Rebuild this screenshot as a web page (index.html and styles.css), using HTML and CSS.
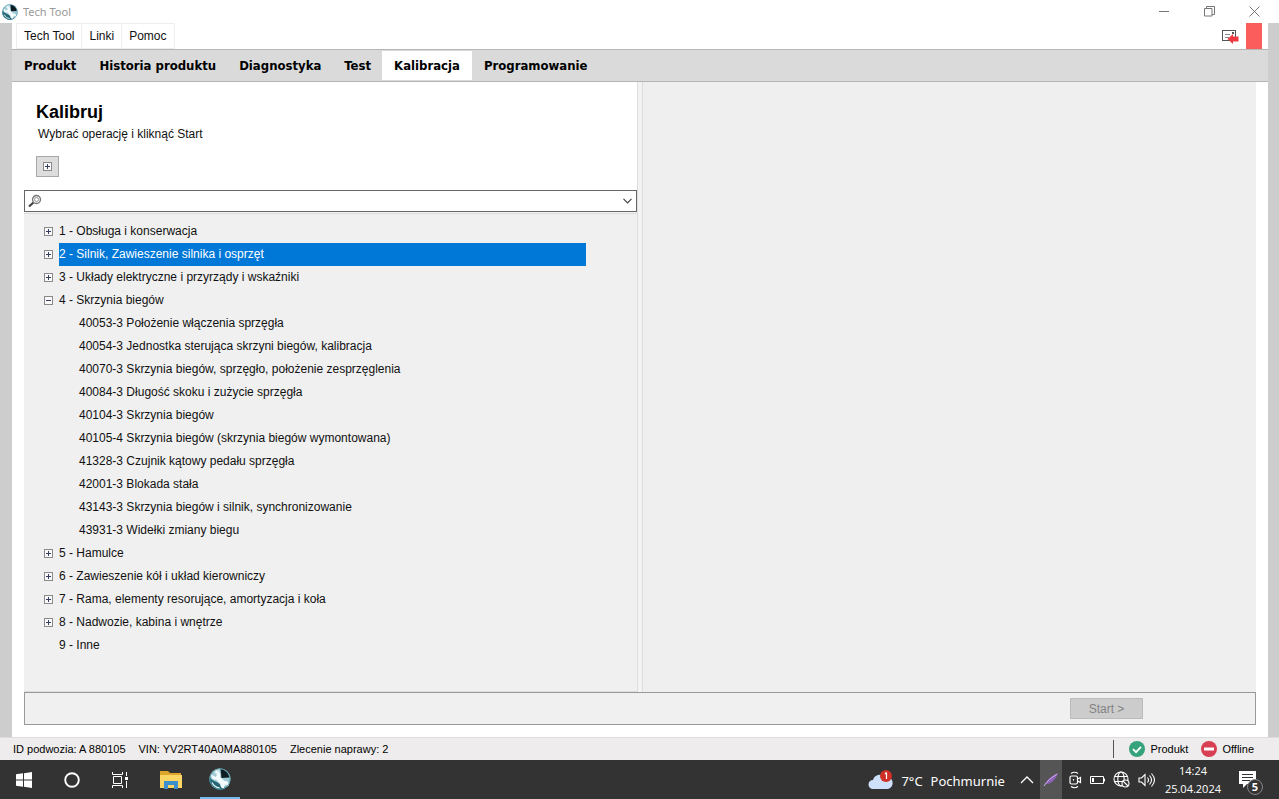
FILE: index.html
```html
<!DOCTYPE html>
<html lang="pl">
<head>
<meta charset="utf-8">
<title>Tech Tool</title>
<link rel="stylesheet" href="styles.css">
</head>
<body>
<svg class="defs" aria-hidden="true">
  <symbol id="logo" viewBox="0 0 22 22">
    <circle cx="11" cy="11" r="10.600" fill="#9fcbd6"/>
    <path d="M4.500 3A10.600 10.600 0 0 1 10.500.4V9L7 6.500z" fill="#cfe6ec"/>
    <path d="M11.500 1A10 10 0 0 1 20.500 9.500L12.500 10z" fill="#101c24"/>
    <path d="M.6 9C3 13 7 13 10 15.500 12 18 15 20 18 19A10.600 10.600 0 0 1 .6 9z" fill="#256373"/>
    <path d="M2.500 6.500l4 2.500 2-2.500-2-3.500c4 .5 5.500 3 4.500 6l4.500 4c3 0 5 2 4 5l-2.500-1.500-2 1.500.5 2.500c-3 0-4.500-2-4-4.500l-4.500-4.500C4.500 12.500 2 10 2.500 6.500z" fill="#f4fbfd"/>
    <path d="M3 14.500c1.500 3 4 5 7.500 5.500" fill="none" stroke="#e6f7fa" stroke-width="1.300"/>
    <circle cx="11" cy="11" r="10.200" fill="none" stroke="#4d95a5" stroke-width=".8"/>
  </symbol>
  <symbol id="plus" viewBox="0 0 9 9">
    <rect x=".5" y=".5" width="8" height="8" fill="#fafafa" stroke="#8a8a8a"/>
    <path d="M2 4.500h5M4.500 2v5" stroke="#33415e"/>
  </symbol>
  <symbol id="minus" viewBox="0 0 9 9">
    <rect x=".5" y=".5" width="8" height="8" fill="#fafafa" stroke="#8a8a8a"/>
    <path d="M2 4.500h5" stroke="#33415e"/>
  </symbol>
</svg>

<header class="titlebar">
  <svg class="title-logo"><use href="#logo"/></svg>
  <span class="title">Tech Tool</span>
  <div class="window-buttons">
    <button aria-label="Minimalizuj"><svg width="11" height="11" viewBox="0 0 11 11"><path d="M0 5.500h10"/></svg></button>
    <button aria-label="Przywróć"><svg width="11" height="11" viewBox="0 0 11 11"><path d="M.5 2.500h7.500v7.500H.5zM2.500 2.500v-2h8v8H8"/></svg></button>
    <button aria-label="Zamknij"><svg width="11" height="11" viewBox="0 0 11 11"><path d="M.5.5l10 10M10.500.5l-10 10"/></svg></button>
  </div>
</header>

<div class="frame">
  <div class="menubar">
    <button class="menu-item">Tech Tool</button>
    <button class="menu-item">Linki</button>
    <button class="menu-item">Pomoc</button>
    <div class="menu-right">
      <svg width="17" height="15" viewBox="0 0 17 15">
        <rect x=".5" y="1.500" width="13" height="10" fill="#fff" stroke="#555"/>
        <path d="M3 5.500h5M3 8.500h4" stroke="#888"/>
        <path d="M10 3h2v2h-2z" fill="#555"/>
        <path d="M5.500 10l5.500-5V7.500h5.500v5H11V15z" fill="#ee3b42"/>
      </svg>
      <span class="flag"></span>
    </div>
  </div>

  <nav class="tabs">
    <button class="tab">Produkt</button>
    <button class="tab">Historia produktu</button>
    <button class="tab">Diagnostyka</button>
    <button class="tab">Test</button>
    <button class="tab active">Kalibracja</button>
    <button class="tab">Programowanie</button>
  </nav>

  <main class="content">
    <div class="panes">
      <section class="left">
        <div class="intro">
          <h1>Kalibruj</h1>
          <p>Wybrać operację i kliknąć Start</p>
          <button class="expand-all" aria-label="Rozwiń wszystko"><svg class="box"><use href="#plus"/></svg></button>
        </div>
        <div class="search">
          <svg width="15" height="14" viewBox="0 0 15 14"><path d="M1 12.500l4.500-4" stroke="#444" stroke-width="2.200"/><circle cx="8.500" cy="5.500" r="4" fill="#eee" stroke="#777" stroke-width="1.300"/><circle cx="8.500" cy="5.500" r="2" fill="#fff" stroke="#999"/></svg>
          <input type="text" aria-label="Szukaj">
          <button aria-label="Pokaż listę"><svg width="9" height="6" viewBox="0 0 9 6"><path d="M.5.8l4 4 4-4" fill="none" stroke="#444" stroke-width="1.200"/></svg></button>
        </div>
        <ul class="tree">
          <li><div class="row"><button aria-label="Rozwiń 1"><svg class="box"><use href="#plus"/></svg></button><span>1 - Obsługa i konserwacja</span></div></li>
          <li><div class="row selected"><button aria-label="Rozwiń 2"><svg class="box"><use href="#plus"/></svg></button><span>2 - Silnik, Zawieszenie silnika i osprzęt</span></div></li>
          <li><div class="row"><button aria-label="Rozwiń 3"><svg class="box"><use href="#plus"/></svg></button><span>3 - Układy elektryczne i przyrządy i wskaźniki</span></div></li>
          <li><div class="row"><button aria-label="Zwiń 4"><svg class="box"><use href="#minus"/></svg></button><span>4 - Skrzynia biegów</span></div>
            <ul class="children">
              <li>40053-3 Położenie włączenia sprzęgła</li>
              <li>40054-3 Jednostka sterująca skrzyni biegów, kalibracja</li>
              <li>40070-3 Skrzynia biegów, sprzęgło, położenie zesprzęglenia</li>
              <li>40084-3 Długość skoku i zużycie sprzęgła</li>
              <li>40104-3 Skrzynia biegów</li>
              <li>40105-4 Skrzynia biegów (skrzynia biegów wymontowana)</li>
              <li>41328-3 Czujnik kątowy pedału sprzęgła</li>
              <li>42001-3 Blokada stała</li>
              <li>43143-3 Skrzynia biegów i silnik, synchronizowanie</li>
              <li>43931-3 Widełki zmiany biegu</li>
            </ul>
          </li>
          <li><div class="row"><button aria-label="Rozwiń 5"><svg class="box"><use href="#plus"/></svg></button><span>5 - Hamulce</span></div></li>
          <li><div class="row"><button aria-label="Rozwiń 6"><svg class="box"><use href="#plus"/></svg></button><span>6 - Zawieszenie kół i układ kierowniczy</span></div></li>
          <li><div class="row"><button aria-label="Rozwiń 7"><svg class="box"><use href="#plus"/></svg></button><span>7 - Rama, elementy resorujące, amortyzacja i koła</span></div></li>
          <li><div class="row"><button aria-label="Rozwiń 8"><svg class="box"><use href="#plus"/></svg></button><span>8 - Nadwozie, kabina i wnętrze</span></div></li>
          <li><div class="row leaf"><span>9 - Inne</span></div></li>
        </ul>
      </section>
      <section class="right"></section>
    </div>
    <div class="actions"><button class="start" disabled>Start &gt;</button></div>
  </main>
</div>

<div class="status">
  <span>ID podwozia: A 880105</span>
  <span>VIN: YV2RT40A0MA880105</span>
  <span>Zlecenie naprawy: 2</span>
  <div class="status-right">
    <span class="state"><svg width="16" height="16" viewBox="0 0 16 16"><circle cx="8" cy="8" r="8" fill="#36a37c"/><path d="M4 8.200l3 3 5-5.400" fill="none" stroke="#fff" stroke-width="1.800"/></svg>Produkt</span>
    <span class="state"><svg width="16" height="16" viewBox="0 0 16 16"><circle cx="8" cy="8" r="8" fill="#d83f52"/><path d="M3 8h10" stroke="#fff" stroke-width="3"/></svg>Offline</span>
  </div>
</div>

<footer class="taskbar">
  <div class="apps">
    <button aria-label="Start"><svg width="16" height="16" viewBox="0 0 16 16" fill="#fff"><path d="M0 2.300l7-1v6.200H0zM8 1.200L16 0v7.500H8zM0 8.500h7v6.200l-7-1zM8 8.500h8V16l-8-1.200z"/></svg></button>
    <button aria-label="Cortana"><svg width="16" height="16" viewBox="0 0 16 16"><circle cx="8" cy="8" r="6.800" fill="none" stroke="#fff" stroke-width="1.900"/></svg></button>
    <button aria-label="Widok zadań"><svg width="17" height="16" viewBox="0 0 17 16" fill="none" stroke="#fff"><path d="M.5 0v2.500h10V0M.5 16v-2.500h10V16M1.500 4.500h8v7h-8zM14.500 0v4M14.500 9v7"/><path d="M13 5h3v3h-3z" fill="#fff" stroke="none"/></svg></button>
    <button class="explorer" aria-label="Eksplorator plików"><svg width="22" height="18" viewBox="0 0 22 18"><path d="M0 0h8l2 2h11v4H0z" fill="#dba62a"/><path d="M0 4h22v13H0z" fill="#fbd665"/><path d="M4 10h14v8h-4v-4H8v4H4z" fill="#3d8fcd"/></svg></button>
    <button class="running" aria-label="Tech Tool"><svg width="22" height="22"><use href="#logo"/></svg></button>
  </div>
  <div class="tray">
    <button class="weather">
      <svg width="26" height="22" viewBox="0 0 26 22"><path d="M5 19a4.500 4.500 0 0 1 0-9 7 7 0 0 1 12-3 6 6 0 0 1 3 12z" fill="#cfe0fa"/><circle cx="18" cy="6" r="6" fill="#cf3027"/><path d="M18.500 2.500V9M17 4l1.500-1.500" stroke="#fff" stroke-width="1.200"/></svg>
      <span>7°C</span><span>Pochmurnie</span>
    </button>
    <button class="chevron" aria-label="Pokaż ukryte ikony"><svg width="14" height="8" viewBox="0 0 14 8"><path d="M1 7l6-6 6 6" fill="none" stroke="#fff" stroke-width="1.300"/></svg></button>
    <button class="pen" aria-label="Pióro"><svg width="16" height="16" viewBox="0 0 16 16"><path d="M2 13C4 7 9 4 15 1 13 7 9 12 3 12z" fill="#8b62b5"/><path d="M1 14C4 9 8 6 14 2" fill="none" stroke="#d4b2f2"/></svg></button>
    <div class="tray-icons">
      <svg width="13" height="18" viewBox="0 0 13 18" fill="none" stroke="#fff" stroke-width="1.200"><path d="M2 2.500q3.500-2.500 7 0M2 15.500q3.500 2.500 7 0"/><rect x="1" y="5" width="7.500" height="8" rx="1.500"/><path d="M8.500 8l3-1.500v5l-3-1.500M4.500 8v1.500"/></svg>
      <svg width="15" height="16" viewBox="0 0 15 16"><path d="M.5 4.500h13v7H.5z" fill="none" stroke="#fff"/><path d="M2 6h2v4H2zM14 6.500h1v3h-1z" fill="#fff"/></svg>
      <svg width="17" height="17" viewBox="0 0 17 17" fill="none" stroke="#fff" stroke-width="1.100"><circle cx="8" cy="8" r="7"/><ellipse cx="8" cy="8" rx="3.200" ry="7"/><path d="M1.500 5.500h13M1.500 10.500h8"/><circle cx="12.500" cy="12.500" r="3.500" fill="#353535"/><path d="M10 10l5 5"/></svg>
      <svg width="18" height="16" viewBox="0 0 18 16" fill="none" stroke="#fff" stroke-width="1.100"><path d="M1 6h2.500L7 2.500v11L3.500 10H1zM9.500 5.500q2 2.500 0 5M11.500 3.500q4 4.500 0 9M13.500 1.500q6 6.500 0 13"/></svg>
    </div>
    <div class="clock"><span>14:24</span><span>25.04.2024</span></div>
    <button class="notify" aria-label="Powiadomienia: 5">
      <svg width="17" height="17" viewBox="0 0 17 17"><path d="M0 0h17v13H8l-4 4v-4H0z" fill="#fff"/><path d="M3 3.500h11M3 6.500h11M3 9.500h8" stroke="#333"/></svg>
      <span class="badge">5</span>
    </button>
  </div>
</footer>
</body>
</html>
```
FILE: styles.css
```css
* { box-sizing: border-box; }

body {
  margin: 0;
  min-height: 100vh;
  display: flex;
  flex-direction: column;
  background: #fff;
  color: #111;
  font: 12px/16px "Liberation Sans", Arial, sans-serif;
}

button {
  margin: 0;
  padding: 0;
  border: 0;
  background: none;
  color: inherit;
  font: inherit;
}

svg { flex: none; display: block; }
ul { margin: 0; padding: 0; list-style: none; }
.defs { display: none; }
.box { width: 9px; height: 9px; }

/* Window title */
.titlebar {
  display: flex;
  align-items: center;
  height: 23px;
  padding-left: 2px;
}
.title-logo { width: 16px; height: 16px; }
.title {
  margin-left: 5px;
  color: #999;
  font: 11px/16px "Noto Sans", sans-serif;
}
.window-buttons { display: flex; margin-left: auto; padding-right: 2px; }
.window-buttons button {
  display: flex;
  justify-content: center;
  align-items: center;
  width: 45px;
  height: 20px;
}
.window-buttons path { fill: none; stroke: #777; }

/* Application frame */
.frame {
  flex: 1;
  display: flex;
  flex-direction: column;
  border: solid #cdcdcd;
  border-width: 0 11px 0 12px;
}
.menubar { display: flex; height: 26px; padding-left: 4px; }
.menu-item {
  padding: 0 7px;
  border: solid #eee;
  border-width: 1px 1px 1px 0;
}
.menu-item:first-child { border-left-width: 1px; }
.menu-right { display: flex; align-items: center; gap: 7px; margin-left: auto; padding-right: 6px; }
.flag { width: 16px; align-self: stretch; background: #fb5c5c; }

.tabs {
  display: flex;
  height: 33px;
  padding: 1px 0;
  border: solid #b5b5b5;
  border-width: 1px 0;
  background: #dadada;
}
.tab {
  padding: 0 11px 0 12px;
  color: #000;
  font: bold 13px/16px "DejaVu Sans Condensed", "DejaVu Sans", sans-serif;
}
.tab.active { padding-right: 12px; background: #fff; }

/* Content */
.content {
  flex: 1;
  display: flex;
  flex-direction: column;
  padding: 0 12px;
}
.panes { flex: 1; display: flex; background: #f3f3f3; }
.left {
  flex: 1;
  display: flex;
  flex-direction: column;
  border-right: 1px solid #ddd;
}
.right { flex: 1; margin-left: 4px; border-left: 1px solid #ddd; background: #efefef; }

.intro { height: 108px; padding: 18px 12px 0; background: #fff; }
h1 { margin: 0; font-size: 18px; line-height: 24px; color: #000; }
p { margin: 2px 0 0 2px; }
.expand-all {
  display: flex;
  align-items: center;
  justify-content: center;
  width: 23px;
  height: 21px;
  margin-top: 14px;
  border: 1px solid #a8a8a8;
  background: #ddd;
}
.search {
  display: flex;
  align-items: center;
  height: 22px;
  padding: 0 4px 0 3px;
  border: 1px solid #666;
  background: #fff;
}
.search input { flex: 1; min-width: 0; border: 0; outline: 0; font: inherit; }

.tree {
  flex: 1;
  margin-top: 1px;
  padding: 6px 51px 24px 20px;
  border: solid #ddd;
  border-width: 1px 0;
  background: #f0f0f0;
}
.row { display: flex; align-items: center; gap: 6px; height: 23px; }
.row span { flex: 1; line-height: 23px; }
.row.leaf { padding-left: 15px; }
.row.selected span { background: #0078d7; color: #fff; }
.children { padding-left: 35px; }
.children li { line-height: 23px; }

.actions {
  display: flex;
  justify-content: flex-end;
  align-items: center;
  height: 33px;
  margin-bottom: 12px;
  padding-right: 112px;
  border: 1px solid #999;
  background: #f0f0f0;
}
.start { width: 73px; height: 21px; border: 1px solid #bbb; background: #ccc; color: #838383; }

/* Status line */
.status {
  display: flex;
  align-items: center;
  gap: 13px;
  height: 23px;
  padding: 0 25px 0 13px;
  border-top: 1px solid #ddd;
  background: #eeecec;
  font-size: 11px;
  color: #000;
}
.status-right {
  display: flex;
  align-items: center;
  gap: 13px;
  height: 18px;
  margin-left: auto;
  padding-left: 15px;
  border-left: 1px solid #555;
}
.state { display: flex; align-items: center; gap: 5px; }

/* Taskbar */
.taskbar {
  display: flex;
  justify-content: space-between;
  height: 39px;
  background: #333;
  color: #fff;
}
.apps, .tray { display: flex; align-items: stretch; }
.apps button { display: flex; align-items: center; justify-content: center; width: 48px; }
.apps .explorer { margin-left: 3px; }
.apps .running { width: 40px; margin-left: 5px; border: solid #76b9ed; border-width: 0 0 2px; }
.weather {
  display: flex;
  align-items: center;
  gap: 7px;
  padding-top: 2px;
  font: 13px/20px "Noto Sans", sans-serif;
}
.weather span + span { margin-left: 1px; }
.chevron { padding: 0 6px 0 15px; }
.pen { display: flex; align-items: center; justify-content: center; width: 22px; background: #555; }
.tray-icons { display: flex; align-items: center; gap: 8px; margin-left: 7px; }
.clock {
  display: flex;
  flex-direction: column;
  align-items: center;
  justify-content: center;
  margin-left: 9px;
  font: 11px/18px "Open Sans", sans-serif;
}
.notify { position: relative; display: flex; align-items: center; margin: 0 23px 0 18px; }
.badge {
  position: absolute;
  left: 8px;
  top: 19px;
  width: 16px;
  height: 16px;
  border: 1px solid #888;
  border-radius: 50%;
  background: #333;
  font: bold 11px/14px "Open Sans", sans-serif;
  text-align: center;
}
```
